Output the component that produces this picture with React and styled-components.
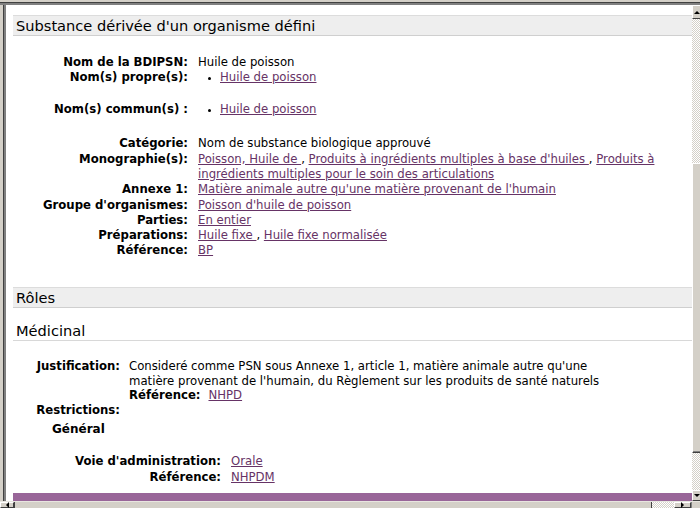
import React from 'react';
import styled, { createGlobalStyle, css } from 'styled-components';

// * : styles
const GlobalStyle = createGlobalStyle`
  html, body {
    margin: 0;
    padding: 0;
    background: #d4d0c8;
  }
`;

const Window = styled.div`
  width: 700px;
  height: 508px;
  display: grid;
  grid-template-columns: 6px 1fr 8px;
  grid-template-rows: 5px 1fr 7px;
  background: #d4d0c8;
  overflow: hidden;
  font-family: "DejaVu Sans", Verdana, sans-serif;
  font-size: 11.7px;
  color: #000;
`;

const TopFrame = styled.div`
  grid-column: 1 / 4;
  border-bottom: 2px solid #808080;
  box-shadow: inset 0 -1px 0 #404040;
`;

const LeftFrame = styled.div`
  border-right: 2px solid #808080;
  box-shadow: inset -1px 0 0 #404040;
`;

const Viewport = styled.div`
  background: #fff;
  overflow: hidden;
  padding: 10px 0 0 7px;
  box-sizing: border-box;
`;

const VScroll = styled.div`
  display: flex;
  flex-direction: column;
  background: repeating-conic-gradient(#d4d0c8 0 25%, #fff 0 50%) 0 0 / 2px 2px;
`;

const arrows = {
  up: css`
    border-left: 3px solid transparent;
    border-right: 3px solid transparent;
    border-bottom: 3px solid #000;
  `,
  down: css`
    border-left: 3px solid transparent;
    border-right: 3px solid transparent;
    border-top: 3px solid #000;
  `,
  left: css`
    border-top: 3px solid transparent;
    border-bottom: 3px solid transparent;
    border-right: 3px solid #000;
  `,
  right: css`
    border-top: 3px solid transparent;
    border-bottom: 3px solid transparent;
    border-left: 3px solid #000;
  `,
};

const ScrollButton = styled.div`
  height: ${(p) => (p.$horizontal ? 'auto' : `${p.$size}px`)};
  width: ${(p) => (p.$horizontal ? `${p.$size}px` : 'auto')};
  flex: none;
  background: #d4d0c8;
  border-top: 1px solid #fff;
  border-left: 1px solid #fff;
  border-bottom: 1px solid #404040;
  border-right: ${(p) => (p.$horizontal ? '1px solid #404040' : 'none')};
  box-sizing: border-box;
  display: flex;
  align-items: center;
  justify-content: center;
  &::after {
    content: '';
    width: 0;
    height: 0;
    ${(p) => arrows[p.$dir]}
  }
`;

const Thumb = styled.div`
  height: ${(p) => p.$size}px;
  flex: none;
  background: #d4d0c8;
  border-top: 1px solid #fff;
  border-left: 1px solid #fff;
  border-bottom: 1px solid #404040;
  box-shadow: inset 0 -1px 0 #808080;
  box-sizing: border-box;
`;

const Track = styled.div`
  flex: ${(p) => (p.$size ? 'none' : '1')};
  height: ${(p) => (p.$size ? `${p.$size}px` : 'auto')};
`;

const HScroll = styled.div`
  grid-column: 1 / 4;
  display: flex;
  background: repeating-conic-gradient(#d4d0c8 0 25%, #fff 0 50%) 0 0 / 2px 2px;
  border-top: 1px solid #e8e6e0;
`;

const HThumb = styled.div`
  width: ${(p) => p.$size}px;
  flex: none;
  background: #d4d0c8;
  border-left: 1px solid #404040;
  border-right: 1px solid #404040;
  box-sizing: border-box;
`;

const Corner = styled.div`
  width: 8px;
  flex: none;
  background: #d4d0c8;
  border-left: 1px solid #808080;
`;

const SectionTitle = styled.h2`
  margin: ${(p) => p.$margin || '0'};
  padding: 0 3px;
  font-family: "DejaVu Sans", Verdana, sans-serif;
  font-size: 14.6px;
  font-weight: normal;
  line-height: ${(p) => (p.$bar ? '19px' : '18px')};
  color: #000;
  background: ${(p) => (p.$bar ? '#eeeeee' : 'transparent')};
  border-top: ${(p) => (p.$bar ? '1px solid #dcdcdc' : 'none')};
  border-bottom: 1px solid ${(p) => (p.$bar ? '#cfcfcf' : '#d8d8d8')};
`;

const DetailGrid = styled.div`
  display: grid;
  grid-template-columns: ${(p) => p.$labelWidth}px 1fr;
  column-gap: ${(p) => p.$gap || 10}px;
  align-items: start;
  line-height: ${(p) => p.$lineHeight || 15.3}px;
  margin: ${(p) => p.$margin || '0'};
`;

const Label = styled.div`
  font-weight: bold;
  text-align: right;
  white-space: nowrap;
`;

const Value = styled.div`
  white-space: nowrap;
`;

const InlineLabel = styled.span`
  font-weight: bold;
  margin-right: 8px;
`;

const Link = styled.a`
  color: #663366;
  text-decoration: underline;
  cursor: pointer;
`;

const BulletList = styled.ul`
  margin: 0 0 ${(p) => p.$after || 16}px 0;
  padding: 0 0 0 22px;
  list-style: disc;
  li::marker {
    font-size: 9px;
  }
`;

const SubHeading = styled.div`
  font-weight: bold;
  font-size: 12px;
  line-height: 15px;
  margin: 4px 0 0 39px;
`;

const Footer = styled.div`
  height: 8px;
  background: #996699;
  margin-top: 8px;
`;

const properNames = ['Huile de poisson'];
const commonNames = ['Huile de poisson'];

function App() {
  return (
    <>
      <GlobalStyle />
      <Window>
        <TopFrame />
        <LeftFrame />
        <Viewport>
          <SectionTitle $bar>Substance dérivée d'un organisme défini</SectionTitle>

          <DetailGrid $labelWidth={175} $margin="18.5px 0 0 0">
            <Label>Nom de la BDIPSN:</Label>
            <Value>Huile de poisson</Value>

            <Label>Nom(s) propre(s):</Label>
            <BulletList $after={17}>
              {properNames.map((name) => (
                <li key={name}>
                  <Link>{name}</Link>
                </li>
              ))}
            </BulletList>

            <Label>Nom(s) commun(s) :</Label>
            <BulletList $after={19}>
              {commonNames.map((name) => (
                <li key={name}>
                  <Link>{name}</Link>
                </li>
              ))}
            </BulletList>

            <Label>Catégorie:</Label>
            <Value>Nom de substance biologique approuvé</Value>

            <Label>Monographie(s):</Label>
            <Value>
              <Link>Poisson, Huile de </Link> , <Link>Produits à ingrédients multiples à base d'huiles </Link> ,{' '}
              <Link>
                Produits à<br />
                ingrédients multiples pour le soin des articulations
              </Link>
            </Value>

            <Label>Annexe 1:</Label>
            <Value>
              <Link>Matière animale autre qu'une matière provenant de l'humain</Link>
            </Value>

            <Label>Groupe d'organismes:</Label>
            <Value>
              <Link>Poisson d'huile de poisson</Link>
            </Value>

            <Label>Parties:</Label>
            <Value>
              <Link>En entier</Link>
            </Value>

            <Label>Préparations:</Label>
            <Value>
              <Link>Huile fixe </Link>, <Link>Huile fixe normalisée</Link>
            </Value>

            <Label>Référence:</Label>
            <Value>
              <Link>BP</Link>
            </Value>
          </DetailGrid>

          <SectionTitle $bar $margin="28px 0 0 0">Rôles</SectionTitle>
          <SectionTitle $margin="14.5px 0 0 0">Médicinal</SectionTitle>

          <DetailGrid $labelWidth={107} $gap={9} $lineHeight={14.8} $margin="17.5px 0 0 0">
            <Label>Justification:</Label>
            <Value>
              Consideré comme PSN sous Annexe 1, article 1, matière animale autre qu'une
              <br />
              matière provenant de l'humain, du Règlement sur les produits de santé naturels
              <br />
              <InlineLabel>Référence:</InlineLabel>
              <Link>NHPD</Link>
            </Value>

            <Label>Restrictions:</Label>
            <Value />
          </DetailGrid>

          <SubHeading>Général</SubHeading>

          <DetailGrid $labelWidth={208} $lineHeight={16} $margin="16.5px 0 0 0">
            <Label>Voie d'administration:</Label>
            <Value>
              <Link>Orale</Link>
            </Value>

            <Label>Référence:</Label>
            <Value>
              <Link>NHPDM</Link>
            </Value>
          </DetailGrid>

          <Footer />
        </Viewport>
        <VScroll>
          <ScrollButton $dir="up" $size={14} />
          <Track $size={144} />
          <Thumb $size={290} />
          <Track />
          <ScrollButton $dir="down" $size={11} />
        </VScroll>
        <HScroll>
          <ScrollButton $horizontal $dir="left" $size={14} />
          <HThumb $size={638} />
          <Track />
          <ScrollButton $horizontal $dir="right" $size={17} />
          <Corner />
        </HScroll>
      </Window>
    </>
  );
}

export default App;
